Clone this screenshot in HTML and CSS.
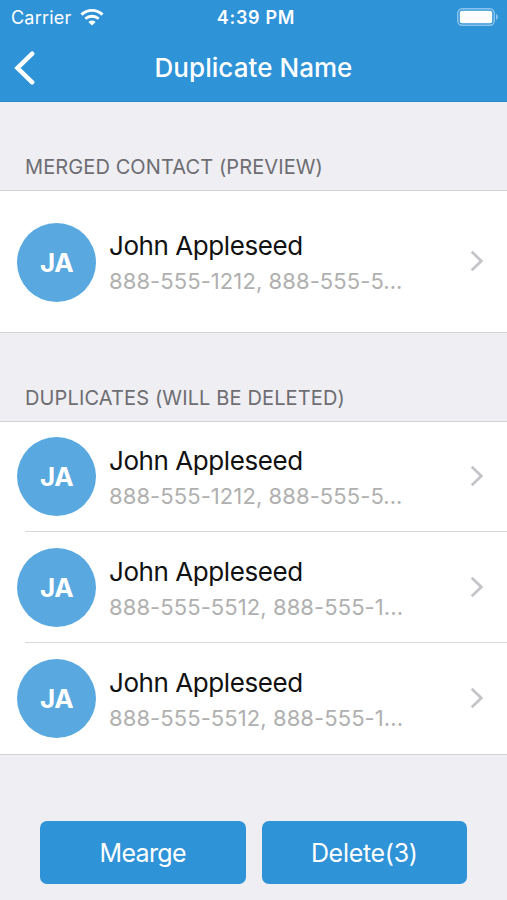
FILE: index.html
```html
<!DOCTYPE html>
<html lang="en">
<head>
<meta charset="utf-8">
<title>Duplicate Name</title>
<link rel="stylesheet" href="styles.css">
</head>
<body>
<header class="top">
  <div class="status">
    <div class="carrier"><span class="t carrier-name">Carrier</span>
      <svg class="wifi" width="24" height="18" viewBox="0 0 24 18"><g fill="none" stroke="#fff" stroke-width="2.900"><path d="M1.500 6.600C7.500 1 16.500 1 22.500 6.600"/><path d="M5.300 10.800c3.800-3.500 9.600-3.500 13.400 0"/></g><path fill="#fff" d="M8.400 13.900c2.200-1.900 5-1.900 7.200 0L12 17.400z"/></svg>
    </div>
    <span class="t time">4:39 PM</span>
    <svg class="battery" width="42" height="18" viewBox="0 0 42 18"><rect x=".75" y=".75" width="36.500" height="16.500" rx="4.500" fill="none" stroke="#8cc6ee" stroke-width="1.400"/><rect x="2.800" y="2.800" width="32.400" height="12.400" rx="2" fill="#fff"/><path d="M39 6c2.500 1 2.500 5 0 6z" fill="#8cc6ee"/></svg>
  </div>
  <div class="nav">
    <svg class="back" width="22" height="34" viewBox="0 0 22 34"><path d="M18.200 2.700L3.500 17l14.700 14.300" fill="none" stroke="#fff" stroke-width="4.500" stroke-linecap="round"/></svg>
    <h1 class="t title">Duplicate Name</h1>
  </div>
</header>
<main>
  <h2 class="head"><span class="t">MERGED CONTACT (PREVIEW)</span></h2>
  <section class="list preview">
    <div class="row"><div class="avatar"><span>JA</span></div><div class="info"><span class="t name">John Appleseed</span><span class="t phone">888-555-1212, 888-555-5...</span></div><svg class="chev" width="14" height="22" viewBox="0 0 14 22"><path d="M1.700 1.700L11.300 11l-9.600 9.300"/></svg></div>
  </section>
  <h2 class="head second"><span class="t">DUPLICATES (WILL BE DELETED)</span></h2>
  <section class="list dupes">
    <div class="row"><div class="avatar"><span>JA</span></div><div class="info"><span class="t name">John Appleseed</span><span class="t phone">888-555-1212, 888-555-5...</span></div><svg class="chev" width="14" height="22" viewBox="0 0 14 22"><path d="M1.700 1.700L11.300 11l-9.600 9.300"/></svg></div>
    <div class="row"><div class="avatar"><span>JA</span></div><div class="info"><span class="t name">John Appleseed</span><span class="t phone">888-555-5512, 888-555-1...</span></div><svg class="chev" width="14" height="22" viewBox="0 0 14 22"><path d="M1.700 1.700L11.300 11l-9.600 9.300"/></svg></div>
    <div class="row"><div class="avatar"><span>JA</span></div><div class="info"><span class="t name">John Appleseed</span><span class="t phone">888-555-5512, 888-555-1...</span></div><svg class="chev" width="14" height="22" viewBox="0 0 14 22"><path d="M1.700 1.700L11.300 11l-9.600 9.300"/></svg></div>
  </section>
  <div class="actions"><button class="merge">Mearge</button><button class="delete">Delete(3)</button></div>
</main>
</body>
</html>
```
FILE: styles.css
```css
* { box-sizing: border-box; }
body { margin: 0; height: 900px; overflow: hidden; background: #eeeef3; font-family: Inter, "Liberation Sans", sans-serif; color: #111; }
h1, h2 { margin: 0; font-weight: 400; }
.t { white-space: nowrap; }
svg { display: block; flex: none; }
.top { height: 102px; background: #2f93d8; color: #fff; border-bottom: 1px solid #2989cd; }
.status { display: grid; grid-template-columns: 1fr auto 1fr; align-items: center; height: 34px; padding: 0 8px 0 11px; }
.carrier { display: flex; align-items: center; gap: 9px; }
.carrier-name { font-size: 18px; letter-spacing: .2px; }
.time { font-size: 18px; font-weight: 600; letter-spacing: .7px; padding-left: 2px; }
.battery { justify-self: end; }
.nav { display: grid; grid-template-columns: 22px 1fr 22px; align-items: center; height: 67px; padding: 0 14px; }
.title { text-align: center; font-size: 26px; font-weight: 550; letter-spacing: .05px; }
.head { height: 88px; padding: 53px 25px 0; font-size: 20px; line-height: 24px; letter-spacing: .1px; color: #6d6d72; }
.second { letter-spacing: .13px; }
.list { background: #fff; border-top: 1px solid #d3d3d7; border-bottom: 1px solid #d3d3d7; }
.preview { padding-top: 2px; }
.row { position: relative; display: flex; align-items: center; height: 111px; padding: 0 23px 0 17px; }
.preview .row { height: 139px; }
.dupes { padding-bottom: 1px; }
.dupes .row { padding-bottom: 2px; }
.dupes .row:last-child { height: 109px; padding-bottom: 0; }
.dupes .row + .row::before { content: ""; position: absolute; top: -2px; left: 25px; right: 0; height: 1px; background: #d8d8db; }
.avatar { display: flex; align-items: center; justify-content: center; width: 79px; height: 79px; border-radius: 50%; background: #59a9e0; color: #fff; font-size: 26px; font-weight: 700; letter-spacing: -.5px; }
.info { display: flex; flex-direction: column; flex: 1; margin-left: 13px; gap: 3px; }
.name { font-size: 26px; line-height: 32px; letter-spacing: -.43px; }
.phone { font-size: 22px; line-height: 32px; letter-spacing: .08px; color: #b0b0b0; }
.preview .info { padding-top: 1px; }
.dupes .info { padding-top: 3px; }
.chev { margin-bottom: 2px; }
.preview .chev { margin-bottom: 3px; }
.chev path { fill: none; stroke: #c4c4c8; stroke-width: 2.7; }
.actions { display: flex; gap: 16px; padding: 66px 40px 0; }
button { flex: 1; height: 63px; padding: 0; border: 0; border-radius: 7px; background: #2f93d8; color: #fff; font: 400 25px Inter, sans-serif; }
.merge { letter-spacing: -.65px; }
.delete { letter-spacing: -.3px; }
```
